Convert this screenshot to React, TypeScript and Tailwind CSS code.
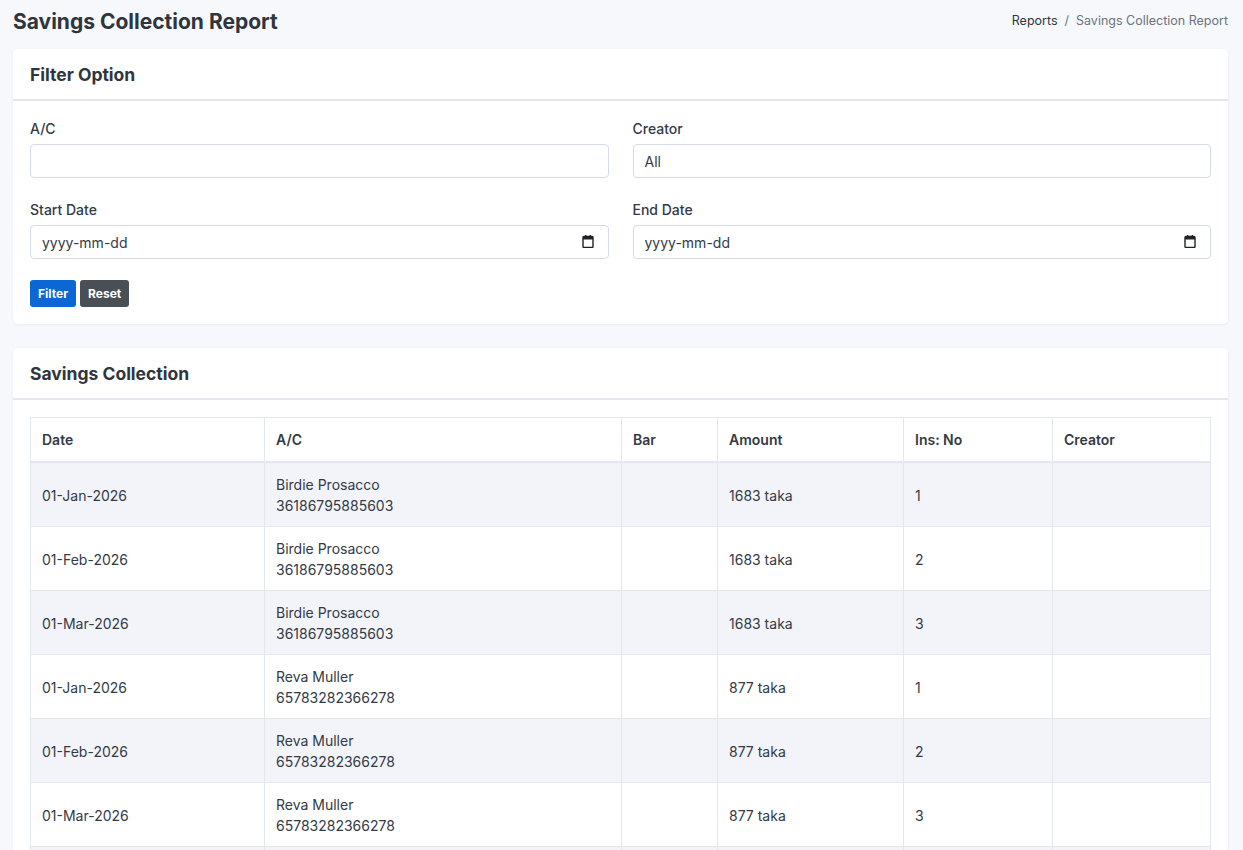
import React from 'react'

const rows = [
  { date: '01-Jan-2026', name: 'Birdie Prosacco', ac: '36186795885603', amount: '1683 taka', ins: '1' },
  { date: '01-Feb-2026', name: 'Birdie Prosacco', ac: '36186795885603', amount: '1683 taka', ins: '2' },
  { date: '01-Mar-2026', name: 'Birdie Prosacco', ac: '36186795885603', amount: '1683 taka', ins: '3' },
  { date: '01-Jan-2026', name: 'Reva Muller', ac: '65783282366278', amount: '877 taka', ins: '1' },
  { date: '01-Feb-2026', name: 'Reva Muller', ac: '65783282366278', amount: '877 taka', ins: '2' },
  { date: '01-Mar-2026', name: 'Reva Muller', ac: '65783282366278', amount: '877 taka', ins: '3' },
  { date: '01-Apr-2026', name: 'Reva Muller', ac: '65783282366278', amount: '877 taka', ins: '4' },
]

function CalendarIcon() {
  return (
    <svg width="12" height="13" viewBox="0 0 12 13" className="text-[#1f2328]">
      <rect x="1" y="1.5" width="10" height="11" rx="1" fill="none" stroke="currentColor" strokeWidth="1.4" />
      <rect x="1" y="1.5" width="10" height="3" fill="currentColor" />
      <rect x="3" y="0" width="1.4" height="2.5" fill="currentColor" />
      <rect x="7.6" y="0" width="1.4" height="2.5" fill="currentColor" />
    </svg>
  )
}

function Field({ label, children }: { label: string; children: React.ReactNode }) {
  return (
    <div className="flex flex-col">
      <label className="mb-[5px] text-[14px] leading-[21px] font-medium text-[#333a44]">{label}</label>
      {children}
    </div>
  )
}

const inputCls =
  'h-[34px] w-full rounded-[4px] border border-[#d5dae6] bg-white px-[11px] text-[14px] text-[#333a44] outline-none placeholder:text-[#333a44]'

function DateInput() {
  return (
    <div className="relative">
      <input type="text" placeholder="yyyy-mm-dd" className={inputCls} />
      <div className="pointer-events-none absolute right-[15px] top-[10px]">
        <CalendarIcon />
      </div>
    </div>
  )
}

function Card({ title, children }: { title: string; children: React.ReactNode }) {
  return (
    <div className="rounded-[5px] bg-white shadow-[0_1px_3px_rgba(30,40,70,0.06)]">
      <div className="border-b-2 border-[#e3e7f0] px-[17px] pt-[14px] pb-[13px]">
        <h2 className="text-[17.5px] leading-[23px] font-bold text-[#2f353d]">{title}</h2>
      </div>
      <div className="px-[17px] py-[17px]">{children}</div>
    </div>
  )
}

const th = 'border border-[#e3e7f0] px-[11px] py-[11px] text-left font-semibold'
const td = 'border border-[#e3e7f0] px-[11px] pt-[11px] pb-[10px]'

export default function App() {
  return (
    <div
      className="min-h-screen bg-[#f6f8fc] pl-[13px] pr-[15px] pb-6 text-[#333a44]"
      style={{ fontFamily: 'Inter, "Noto Sans", sans-serif' }}
    >
      <div className="flex h-[43px] items-center justify-between">
        <h1 className="text-[21px] font-bold leading-[28px] text-[#2f353d]">Savings Collection Report</h1>
        <div className="flex items-center gap-[7px] text-[12.5px]">
          <span className="text-[#2f353d]">Reports</span>
          <span className="text-[#6c737d]">/</span>
          <span className="text-[#6c737d]">Savings Collection Report</span>
        </div>
      </div>

      <div className="mt-[6px] flex flex-col gap-[24px]">
        <Card title="Filter Option">
          <div className="grid grid-cols-2 gap-x-[24px] gap-y-[21px]">
            <Field label="A/C">
              <input type="text" className={inputCls} />
            </Field>
            <Field label="Creator">
              <div className={inputCls + ' flex items-center'}>All</div>
            </Field>
            <Field label="Start Date">
              <DateInput />
            </Field>
            <Field label="End Date">
              <DateInput />
            </Field>
          </div>
          <div className="mt-[21px] flex gap-[4px]">
            <button className="h-[27px] rounded-[3px] bg-[#0b67d3] px-[8px] text-[12px] font-bold text-white">Filter</button>
            <button className="h-[27px] rounded-[3px] bg-[#4a4f56] px-[8px] text-[12px] font-bold text-white">Reset</button>
          </div>
        </Card>

        <Card title="Savings Collection">
          <table className="w-full border-collapse text-[14px] leading-[21px]">
            <thead>
              <tr className="border-b-2 border-[#e3e7f0]">
                <th className={th + ' w-[234px]'}>Date</th>
                <th className={th + ' w-[357px]'}>A/C</th>
                <th className={th + ' w-[96px]'}>Bar</th>
                <th className={th + ' w-[186px]'}>Amount</th>
                <th className={th + ' w-[149px]'}>Ins: No</th>
                <th className={th}>Creator</th>
              </tr>
            </thead>
            <tbody>
              {rows.map((r, i) => (
                <tr key={i} className={i % 2 === 0 ? 'bg-[#f2f4f9]' : 'bg-white'}>
                  <td className={td}>{r.date}</td>
                  <td className={td}>
                    {r.name}
                    <br />
                    {r.ac}
                  </td>
                  <td className={td}></td>
                  <td className={td}>{r.amount}</td>
                  <td className={td}>{r.ins}</td>
                  <td className={td}></td>
                </tr>
              ))}
            </tbody>
          </table>
        </Card>
      </div>
    </div>
  )
}
